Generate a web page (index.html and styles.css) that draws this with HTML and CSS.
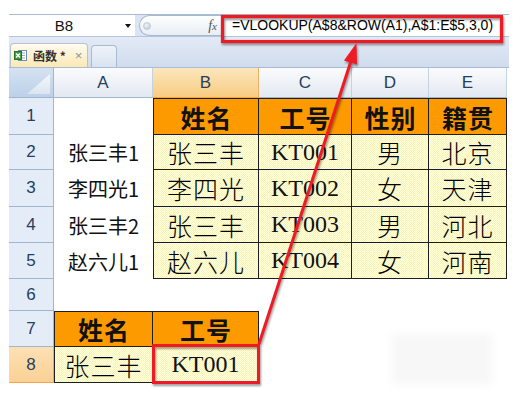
FILE: index.html
```html
<!DOCTYPE html>
<html lang="zh-CN">
<head>
<meta charset="utf-8">
<title>函数</title>
<link rel="stylesheet" href="styles.css">
</head>
<body>
<div class="app">
  <div class="fbar">
    <div class="namebox"><span class="ref">B8</span><span class="dd"></span></div>
    <div class="fxbtn"><span class="knob"></span><span class="fx">f<span class="x">x</span></span></div>
    <div class="formula">=VLOOKUP(A$8&amp;ROW(A1),A$1:E$5,3,0)</div>
  </div>
  <div class="tabs">
    <div class="tab active">
      <svg class="xlicon" width="13" height="13" viewBox="0 0 13 13">
        <rect x="4.5" y="1.5" width="8" height="10" fill="#fff" stroke="#6f8fa8"/>
        <line x1="6" y1="4" x2="11" y2="4" stroke="#8fb0c8"/>
        <line x1="6" y1="6.5" x2="11" y2="6.5" stroke="#8fb0c8"/>
        <line x1="6" y1="9" x2="11" y2="9" stroke="#8fb0c8"/>
        <rect x="0.5" y="2.5" width="7" height="8" fill="#3f9a3f" stroke="#2b6e2b"/>
        <path d="M2 4.5 L6 8.5 M6 4.5 L2 8.5" stroke="#fff" stroke-width="1.3"/>
      </svg>
      <span class="tname">函数 *</span>
      <span class="close">×</span>
    </div>
    <div class="tab blank"></div>
  </div>
  <div class="sheet">
    <div class="corner"></div>
    <div class="ch">A</div>
    <div class="ch sel">B</div>
    <div class="ch">C</div>
    <div class="ch">D</div>
    <div class="ch">E</div>

    <div class="rh">1</div>
    <div class="blank"></div>
    <div class="hd fc fr">姓名</div>
    <div class="hd fr">工号</div>
    <div class="hd fr">性别</div>
    <div class="hd fr">籍贯</div>

    <div class="rh">2</div>
    <div class="a">张三丰1</div>
    <div class="d fc">张三丰</div>
    <div class="d num">KT001</div>
    <div class="d">男</div>
    <div class="d">北京</div>

    <div class="rh">3</div>
    <div class="a">李四光1</div>
    <div class="d fc">李四光</div>
    <div class="d num">KT002</div>
    <div class="d">女</div>
    <div class="d">天津</div>

    <div class="rh">4</div>
    <div class="a">张三丰2</div>
    <div class="d fc">张三丰</div>
    <div class="d num">KT003</div>
    <div class="d">男</div>
    <div class="d">河北</div>

    <div class="rh">5</div>
    <div class="a">赵六儿1</div>
    <div class="d fc">赵六儿</div>
    <div class="d num">KT004</div>
    <div class="d">女</div>
    <div class="d">河南</div>

    <div class="rh">6</div>
    <div class="blank span5"></div>

    <div class="rh">7</div>
    <div class="hd fc fr">姓名</div>
    <div class="hd fr">工号</div>
    <div class="blank span3"></div>

    <div class="rh sel">8</div>
    <div class="d fc">张三丰</div>
    <div class="d num">KT001</div>
    <div class="blank span3"></div>
  </div>
</div>
<div class="wm"></div>
<svg class="annot" width="528" height="409" viewBox="0 0 528 409">
  <g class="marks">
    <rect x="222.5" y="16.5" width="279" height="25" fill="none" stroke="#ee1b24" stroke-width="3.2"/>
    <rect x="153.5" y="345.5" width="105" height="37" fill="none" stroke="#ee1b24" stroke-width="3"/>
    <line x1="259" y1="344" x2="352" y2="58" stroke="#ee1b24" stroke-width="3"/>
    <polygon points="356.5,43 357,64.5 344,60.5" fill="#ee1b24"/>
  </g>
</svg>
</body>
</html>
```

FILE: styles.css
```css
* { box-sizing: border-box; }
html, body { margin: 0; padding: 0; }
body {
  width: 528px;
  height: 409px;
  background: #fff;
  overflow: hidden;
  position: relative;
  font-family: "Liberation Sans", Arial, "Noto Sans CJK SC", sans-serif;
}
.app {
  padding: 14px 0 0 9px;
  width: 509px;
}

/* formula bar */
.fbar {
  display: flex;
  height: 23px;
  border-top: 1px solid #a9bcd4;
  border-bottom: 1px solid #b6c6da;
  background: #dbe5f1;
}
.namebox {
  width: 126px;
  background: #fff;
  display: flex;
  align-items: center;
  position: relative;
}
.ref {
  flex: 1;
  text-align: center;
  font-size: 15px;
  color: #111;
  padding-left: 2px;
}
.dd {
  width: 0; height: 0;
  border-left: 3.5px solid transparent;
  border-right: 3.5px solid transparent;
  border-top: 4px solid #111;
  margin: 0 4px 0 8px;
}
.fxbtn {
  width: 83px;
  margin-left: 4px;
  border: 1px solid #a7b9cf;
  border-right: none;
  border-radius: 11px 0 0 11px;
  background: linear-gradient(#fdfefe, #e8eef5);
  display: flex;
  align-items: center;
  justify-content: space-between;
  padding: 0 5px 0 3px;
}
.knob {
  width: 8px; height: 8px;
  border-radius: 50%;
  background: radial-gradient(circle at 40% 35%, #f3f5f8, #b8c2ce);
  border: 1px solid #c2cad4;
}
.fx {
  font-family: "Liberation Serif", serif;
  font-style: italic;
  font-size: 14px;
  color: #555;
}
.fx .x { font-size: 11px; }
.formula {
  flex: 1;
  background: #fff;
  border-left: 1px solid #b6c6da;
  font-size: 14px;
  line-height: 21px;
  padding-left: 9px;
  color: #000;
  white-space: nowrap;
}

/* tabs */
.tabs {
  height: 31px;
  background: linear-gradient(#e2eaf5, #d0dced);
  border-bottom: 1px solid #a9bcd4;
  display: flex;
  align-items: flex-end;
  padding-left: 1px;
}
.tab {
  border: 1px solid #b4c3d5;
  border-bottom: none;
  border-radius: 4px 4px 0 0;
}
.tab.active {
  width: 78px;
  height: 24px;
  background: linear-gradient(#fffbef, #fbe8b4);
  display: flex;
  align-items: center;
  padding-left: 3px;
}
.xlicon { flex: none; }
.tname {
  font-family: "Noto Sans CJK SC", sans-serif;
  font-weight: 700;
  font-size: 12px;
  color: #333;
  margin-left: 6px;
}
.close {
  font-size: 13px;
  color: #8a96a4;
  margin-left: 9px;
}
.tab.blank {
  width: 26px;
  height: 22px;
  margin-left: 3px;
  background: linear-gradient(#eef3f9, #d8e3f0);
  border-color: #a9bbd0;
}

/* sheet */
.sheet {
  display: grid;
  grid-template-columns: 45px 99px 106px 93px 77px 78px;
  grid-template-rows: 30px 37px 35px 37px 36px 36px 32px 36px 36px;
  font-family: "Noto Sans CJK SC", sans-serif;
}
.sheet > div {
  display: flex;
  align-items: center;
  justify-content: center;
}
.corner {
  background: linear-gradient(#d5e2f2, #bcd0e9);
  border-right: 1px solid #9eb6ce;
  border-bottom: 1px solid #9eb6ce;
  position: relative;
}
.corner::after {
  content: "";
  position: absolute;
  right: 3px;
  bottom: 3px;
  width: 23px;
  height: 20px;
  background: linear-gradient(#f6f8fb, #dbe4ef);
  clip-path: polygon(100% 0, 100% 100%, 0 100%);
}
.ch {
  background: linear-gradient(#fafbfd, #e3e9f1);
  border-right: 1px solid #c6d2e0;
  border-bottom: 1px solid #9eb6ce;
  font-family: "Liberation Sans", Arial, sans-serif;
  font-size: 17px;
  color: #253f5c;
}
.ch.sel {
  background: linear-gradient(#fce6bd, #f8cc82);
  border-right-color: #eeb062;
  border-bottom-color: #eea449;
}
.rh {
  background: #e4ecf7;
  border-right: 1px solid #9eb6ce;
  border-bottom: 1px solid #9eb6ce;
  font-family: "Liberation Sans", Arial, sans-serif;
  font-size: 17px;
  color: #253f5c;
}
.rh.sel {
  background: linear-gradient(#fde0b4, #fbd095);
  border-right-color: #f0a94f;
  border-bottom-color: #f0a94f;
}
.blank { background: #fff; }
.span5 { grid-column: span 5; }
.span3 { grid-column: span 3; }
.a {
  font-size: 20px;
  color: #111;
  background: #fff;
}
.hd, .d {
  border-right: 1px solid #1e1e1e;
  border-bottom: 1px solid #1e1e1e;
  color: #111;
}
.fc { border-left: 1px solid #1e1e1e; }
.fr { border-top: 1px solid #1e1e1e; }
.hd {
  background: #fd9a00;
  font-size: 25px;
  font-weight: 700;
  letter-spacing: 1px;
  padding-left: 1px;
}
.d {
  background: repeating-conic-gradient(#fbf6a6 0 25%, #fffff2 0 50%) 0 0 / 2px 2px;
  font-size: 25px;
  font-weight: 300;
  letter-spacing: 1px;
  color: #000;
}
.d.num {
  font-family: "Liberation Serif", "Times New Roman", serif;
  font-size: 24px;
  font-weight: 400;
  letter-spacing: 0;
  color: #111;
}

/* overlays */
.annot {
  position: absolute;
  left: 0;
  top: 0;
  pointer-events: none;
}
.marks { filter: drop-shadow(1px 2px 1px rgba(0, 0, 0, 0.4)); }
.wm {
  position: absolute;
  left: 392px;
  top: 334px;
  width: 100px;
  height: 50px;
  background: rgba(0, 0, 0, 0.03);
  filter: blur(4px);
}
```
